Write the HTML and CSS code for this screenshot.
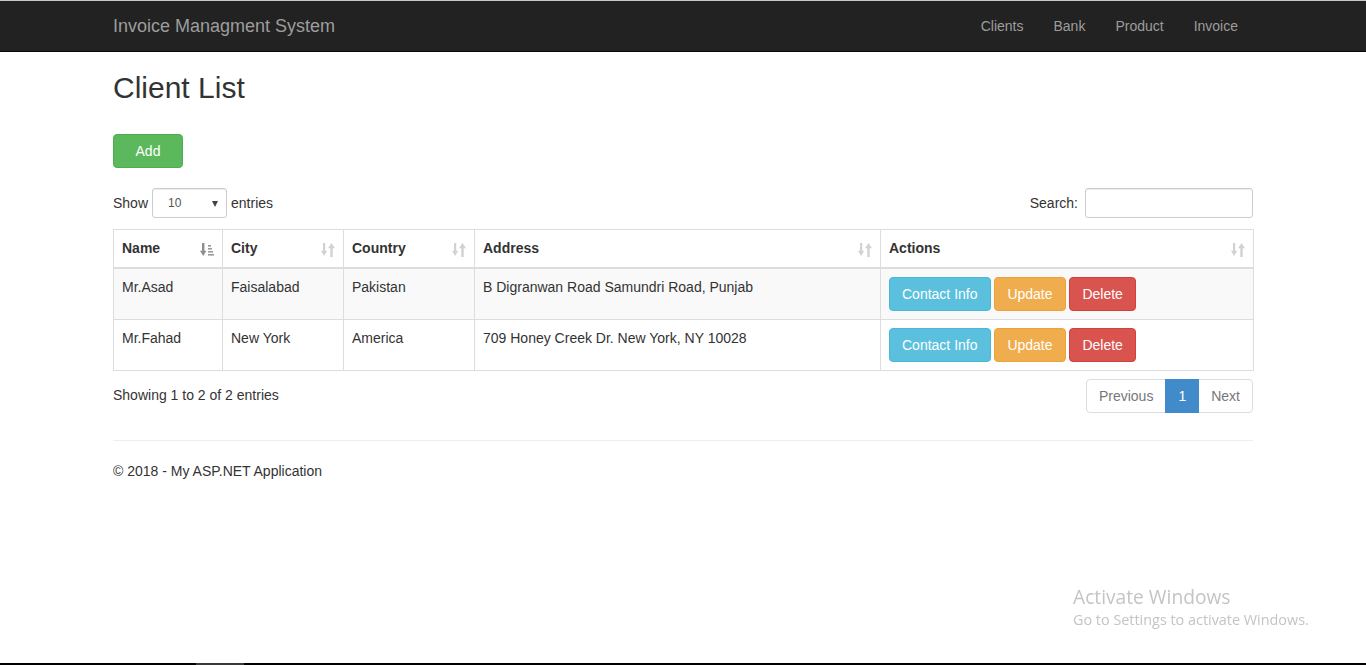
FILE: index.html
```html
<!DOCTYPE html>
<html lang="en">
<head>
<meta charset="utf-8">
<title>Client List - Invoice Managment System</title>
<link rel="stylesheet" href="styles.css">
</head>
<body>
<div class="topline"></div>
<nav class="navbar">
  <div class="container navbar-inner">
    <a class="brand" href="#">Invoice Managment System</a>
    <ul class="nav">
      <li><a href="#">Clients</a></li>
      <li><a href="#">Bank</a></li>
      <li><a href="#">Product</a></li>
      <li><a href="#">Invoice</a></li>
    </ul>
  </div>
</nav>

<main class="container body-content">
  <h2 class="title">Client List</h2>
  <p class="add-row"><a class="btn btn-success btn-add" href="#">Add</a></p>

  <div class="dt-top">
    <label class="dt-length">Show
      <span class="select-wrap"><select class="dt-select"><option>10</option><option>25</option><option>50</option><option>100</option></select></span>
      entries</label>
    <label class="dt-search">Search:<input class="dt-input" type="search"></label>
  </div>

  <table class="dt-table">
    <colgroup>
      <col class="c-name"><col class="c-city"><col class="c-country"><col class="c-address"><col class="c-actions">
    </colgroup>
    <thead>
      <tr>
        <th>Name
          <svg class="sort-icon sort-asc" viewBox="0 0 15 15" width="15" height="15" aria-hidden="true">
            <rect x="2" y="1" width="2.4" height="8.5"/>
            <polygon points="0,8.8 6.4,8.8 3.2,14"/>
            <rect class="bar" x="8" y="3" width="3" height="1.6"/>
            <rect class="bar" x="8" y="6" width="4" height="1.6"/>
            <rect class="bar" x="8" y="9" width="5" height="1.6"/>
            <rect class="bar" x="8" y="12" width="6" height="1.6"/>
          </svg>
        </th>
        <th>City
          <svg class="sort-icon sort-both" viewBox="0 0 15 15" width="15" height="15" aria-hidden="true">
            <rect x="2" y="1" width="2.2" height="8.5"/>
            <polygon points="0,8.8 6.2,8.8 3.1,14"/>
            <polygon points="7,6.2 14,6.2 10.5,1"/>
            <rect x="9.3" y="5.5" width="2.4" height="9.5"/>
          </svg>
        </th>
        <th>Country
          <svg class="sort-icon sort-both" viewBox="0 0 15 15" width="15" height="15" aria-hidden="true">
            <rect x="2" y="1" width="2.2" height="8.5"/>
            <polygon points="0,8.8 6.2,8.8 3.1,14"/>
            <polygon points="7,6.2 14,6.2 10.5,1"/>
            <rect x="9.3" y="5.5" width="2.4" height="9.5"/>
          </svg>
        </th>
        <th>Address
          <svg class="sort-icon sort-both" viewBox="0 0 15 15" width="15" height="15" aria-hidden="true">
            <rect x="2" y="1" width="2.2" height="8.5"/>
            <polygon points="0,8.8 6.2,8.8 3.1,14"/>
            <polygon points="7,6.2 14,6.2 10.5,1"/>
            <rect x="9.3" y="5.5" width="2.4" height="9.5"/>
          </svg>
        </th>
        <th>Actions
          <svg class="sort-icon sort-both" viewBox="0 0 15 15" width="15" height="15" aria-hidden="true">
            <rect x="2" y="1" width="2.2" height="8.5"/>
            <polygon points="0,8.8 6.2,8.8 3.1,14"/>
            <polygon points="7,6.2 14,6.2 10.5,1"/>
            <rect x="9.3" y="5.5" width="2.4" height="9.5"/>
          </svg>
        </th>
      </tr>
    </thead>
    <tbody>
      <tr class="odd">
        <td>Mr.Asad</td>
        <td>Faisalabad</td>
        <td>Pakistan</td>
        <td>B Digranwan Road Samundri Road, Punjab</td>
        <td class="actions"><a class="btn btn-info" href="#">Contact Info</a> <a class="btn btn-warning" href="#">Update</a> <a class="btn btn-danger" href="#">Delete</a></td>
      </tr>
      <tr class="even">
        <td>Mr.Fahad</td>
        <td>New York</td>
        <td>America</td>
        <td>709 Honey Creek Dr. New York, NY 10028</td>
        <td class="actions"><a class="btn btn-info" href="#">Contact Info</a> <a class="btn btn-warning" href="#">Update</a> <a class="btn btn-danger" href="#">Delete</a></td>
      </tr>
    </tbody>
  </table>

  <div class="dt-bottom">
    <div class="dt-info">Showing 1 to 2 of 2 entries</div>
    <ul class="pagination">
      <li class="disabled"><a href="#">Previous</a></li>
      <li class="active"><a href="#">1</a></li>
      <li class="disabled"><a href="#">Next</a></li>
    </ul>
  </div>

  <hr class="sep">
  <footer class="footer">
    <p>&copy; 2018 - My ASP.NET Application</p>
  </footer>
</main>

<div class="watermark">
  <div class="wm-title">Activate Windows</div>
  <div class="wm-sub">Go to Settings to activate Windows.</div>
</div>
<div class="taskbar-edge"><span class="taskbar-seg"></span></div>
</body>
</html>
```

FILE: styles.css
```css
* { box-sizing: border-box; }

html, body {
  margin: 0;
  padding: 0;
  background: #fff;
}

body {
  font-family: "Liberation Sans", Arial, Helvetica, sans-serif;
  font-size: 14px;
  line-height: 20px;
  color: #333;
}

a { text-decoration: none; }

.container {
  width: 1140px;
  margin: 0 auto;
}

.topline {
  height: 1px;
  background: #c9c9c9;
}

/* Navbar */
.navbar {
  height: 51px;
  background: #222;
  border-bottom: 1px solid #080808;
}

.navbar-inner {
  display: flex;
  justify-content: space-between;
  align-items: flex-start;
  height: 50px;
}

.brand {
  font-size: 18px;
  line-height: 20px;
  padding: 15px 0;
  color: #9d9d9d;
}

.nav {
  list-style: none;
  margin: 0;
  padding: 0;
  display: flex;
}

.nav a {
  display: block;
  padding: 15px 15px;
  line-height: 20px;
  color: #9d9d9d;
}

/* Content */
.title {
  font-size: 30px;
  font-weight: 500;
  line-height: 33px;
  margin: 19px 0 30px;
  color: #333;
}

.add-row {
  margin: 0 0 20px;
  height: 34px;
}

.btn {
  display: inline-block;
  padding: 6px 12px;
  font-size: 14px;
  line-height: 20px;
  border: 1px solid transparent;
  border-radius: 4px;
  color: #fff;
  text-align: center;
  vertical-align: middle;
  white-space: nowrap;
}

.btn-add { width: 70px; }

.btn-success { background: #5cb85c; border-color: #4cae4c; }
.btn-info { background: #5bc0de; border-color: #46b8da; }
.btn-warning { background: #f0ad4e; border-color: #eea236; }
.btn-danger { background: #d9534f; border-color: #d43f3a; }

/* DataTables top */
.dt-top {
  display: flex;
  justify-content: space-between;
  align-items: center;
  height: 30px;
  margin-bottom: 11px;
}

.dt-length, .dt-search {
  display: flex;
  align-items: center;
  font-weight: normal;
}

.select-wrap {
  position: relative;
  display: inline-block;
  margin: 0 4px;
}

.select-wrap::after {
  content: "";
  position: absolute;
  right: 9px;
  top: 13px;
  border-left: 3.5px solid transparent;
  border-right: 3.5px solid transparent;
  border-top: 6px solid #444;
  pointer-events: none;
}

.dt-select {
  appearance: none;
  -webkit-appearance: none;
  width: 75px;
  height: 30px;
  padding: 0 0 0 15px;
  font-family: "Liberation Sans", Arial, sans-serif;
  font-size: 12px;
  color: #555;
  background: #fff;
  border: 1px solid #ccc;
  border-radius: 3px;
  box-shadow: inset 0 1px 1px rgba(0,0,0,.075);
}

.dt-input {
  width: 168px;
  height: 30px;
  margin-left: 7px;
  padding: 5px 10px;
  font-size: 12px;
  border: 1px solid #ccc;
  border-radius: 3px;
  box-shadow: inset 0 1px 1px rgba(0,0,0,.075);
}

/* Table */
.dt-table {
  width: 1140px;
  table-layout: fixed;
  border-collapse: collapse;
  border: 1px solid #ddd;
}

.c-name { width: 109px; }
.c-city { width: 121px; }
.c-country { width: 131px; }
.c-address { width: 406px; }
.c-actions { width: 373px; }

.dt-table th,
.dt-table td {
  border: 1px solid #ddd;
  padding: 8px;
  line-height: 20px;
  text-align: left;
  vertical-align: top;
}

.dt-table th {
  position: relative;
  font-weight: bold;
  border-bottom: 2px solid #ddd;
  padding: 8px 30px 9px 8px;
}

.dt-table td.actions { white-space: nowrap; }

.dt-table tr.odd td { background: #f9f9f9; }

.sort-icon {
  position: absolute;
  right: 7px;
  top: 12px;
}

.sort-both { fill: #d2d2d2; }
.sort-asc { fill: #8f8f8f; }
.sort-asc .bar { fill: #9a9a9a; }

/* DataTables bottom */
.dt-bottom {
  display: flex;
  justify-content: space-between;
  align-items: flex-start;
  margin-top: 8px;
  height: 34px;
}

.dt-info {
  padding-top: 6px;
}

.pagination {
  list-style: none;
  margin: 0;
  padding: 0;
  display: flex;
}

.pagination li a {
  display: block;
  padding: 6px 12px;
  line-height: 20px;
  border: 1px solid #ddd;
  margin-left: -1px;
  color: #428bca;
  background: #fff;
}

.pagination li:first-child a {
  margin-left: 0;
  border-radius: 4px 0 0 4px;
}

.pagination li:last-child a {
  border-radius: 0 4px 4px 0;
}

.pagination li.disabled a { color: #777; }

.pagination li.active a {
  color: #fff;
  background: #428bca;
  border-color: #428bca;
  position: relative;
}

.sep {
  border: 0;
  border-top: 1px solid #eee;
  margin: 27px 0 20px;
}

.footer p { margin: 0; }

/* Desktop overlays */
.watermark {
  position: fixed;
  left: 1073px;
  top: 584px;
  font-family: "Open Sans", "Noto Sans", sans-serif;
  color: #c4c4c4;
  white-space: nowrap;
}

.wm-title {
  font-size: 19.2px;
  line-height: 26px;
}

.wm-sub {
  font-size: 14.4px;
  line-height: 20px;
}

.taskbar-edge {
  position: fixed;
  left: 0;
  right: 0;
  bottom: 0;
  height: 2px;
  background: #000;
}

.taskbar-seg {
  position: absolute;
  left: 196px;
  width: 48px;
  top: 0;
  height: 2px;
  background: #3a3a3a;
}
```
